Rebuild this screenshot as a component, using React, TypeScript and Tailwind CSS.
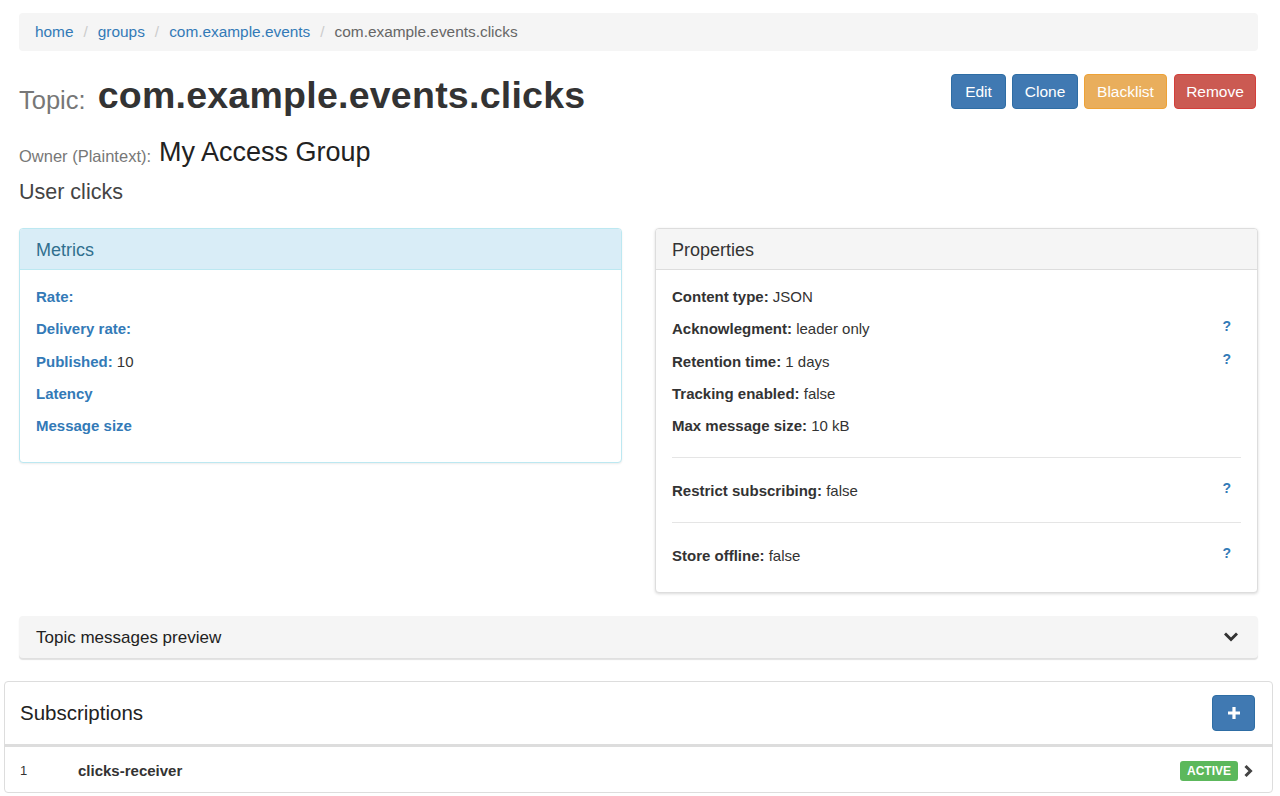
import React from "react";

const Q = () => (
  <span className="text-[14px] font-bold leading-none text-[#337ab7] relative -top-[3px]">?</span>
);

const Item = ({ label, value, help, blue }: { label: string; value?: string; help?: boolean; blue?: boolean }) => (
  <div className="flex items-center justify-between mb-[11.25px] leading-[21px]">
    <div>
      <span className={blue ? "font-bold text-[#337ab7]" : "font-bold text-[#333]"}>{label}</span>
      {value !== undefined && <span className="text-[#333]"> {value}</span>}
    </div>
    {help && <span className="pr-[10px]"><Q /></span>}
  </div>
);

export default function App() {
  return (
    <div className="min-h-[796px] bg-white font-['Liberation_Sans',Arial,sans-serif] text-[15px] text-[#333]">
      <div className="pl-[4px] pr-[7px]">
        <div className="px-[15px] pt-[13px]">
          {/* breadcrumb */}
          <div className="flex h-[38px] items-center rounded-[4px] bg-[#f5f5f5] px-[16px] text-[15.4px]">
            <span className="text-[#337ab7]">home</span>
            <span className="px-[10px] text-[#ccc]">/</span>
            <span className="text-[#337ab7]">groups</span>
            <span className="px-[10px] text-[#ccc]">/</span>
            <span className="text-[#337ab7]">com.example.events</span>
            <span className="px-[10px] text-[#ccc]">/</span>
            <span className="text-[#666]">com.example.events.clicks</span>
          </div>

          {/* title */}
          <div className="mt-[23px] flex items-start justify-between">
            <h1 className="flex h-[44px] items-end pb-[4px] leading-none">
              <span className="text-[25.5px] text-[#777] mr-[12px] mb-[1px]">Topic:</span>
              <span className="text-[37.5px] font-bold tracking-[0.25px] text-[#333]">com.example.events.clicks</span>
            </h1>
            <div className="flex gap-[6px] pr-[2px] text-[15.5px] text-white">
              <button className="h-[35px] w-[55px] rounded-[4px] border border-[#2e6da4] bg-[#4079b2] pt-[1px]">Edit</button>
              <button className="h-[35px] w-[66px] rounded-[4px] border border-[#2e6da4] bg-[#4079b2] pt-[1px]">Clone</button>
              <button className="h-[35px] w-[83px] rounded-[4px] border border-[#eea236] bg-[#e9ae5c] pt-[1px]">Blacklist</button>
              <button className="ml-[1px] h-[35px] w-[82px] rounded-[4px] border border-[#d43f3a] bg-[#cb5a52] pt-[1px]">Remove</button>
            </div>
          </div>

          {/* owner */}
          <div className="mt-[18px] flex h-[32px] items-end pb-[2px] leading-none">
            <span className="text-[16.5px] text-[#777] mr-[8px] mb-[2px]">Owner (Plaintext):</span>
            <span className="text-[27px] text-[#222]">My Access Group</span>
          </div>

          {/* description */}
          <div className="mt-[10px] h-[28px] text-[21.5px] leading-[28px] text-[#444]">User clicks</div>

          {/* panels */}
          <div className="mt-[22px] grid grid-cols-2 items-start gap-[33px]">
            <div className="rounded-[4px] border border-[#bce8f1] bg-white shadow-[0_1px_2px_rgba(0,0,0,0.08)]">
              <div className="flex h-[41px] items-center rounded-t-[3px] border-b border-[#bce8f1] bg-[#d9edf7] px-[16px] pt-[2px] text-[18px] text-[#31708f]">
                Metrics
              </div>
              <div className="px-[16px] pt-[16px] pb-[15px]">
                <Item label="Rate:" blue />
                <Item label="Delivery rate:" blue />
                <Item label="Published:" value="10" blue />
                <Item label="Latency" blue />
                <Item label="Message size" blue />
              </div>
            </div>

            <div className="rounded-[4px] border border-[#ddd] bg-white shadow-[0_1px_3px_rgba(0,0,0,0.15)]">
              <div className="flex h-[41px] items-center rounded-t-[3px] border-b border-[#ddd] bg-[#f5f5f5] px-[16px] pt-[2px] text-[18px] text-[#333]">
                Properties
              </div>
              <div className="px-[16px] pt-[16px] pb-[15px]">
                <Item label="Content type:" value="JSON" />
                <Item label="Acknowlegment:" value="leader only" help />
                <Item label="Retention time:" value="1 days" help />
                <Item label="Tracking enabled:" value="false" />
                <Item label="Max message size:" value="10 kB" />
                <hr className="mt-[21px] mb-[22px] border-t border-[#e5e5e5]" />
                <Item label="Restrict subscribing:" value="false" help />
                <hr className="mt-[21px] mb-[22px] border-t border-[#e5e5e5]" />
                <Item label="Store offline:" value="false" help />
              </div>
            </div>
          </div>

          {/* topic messages preview */}
          <div className="mt-[23px] flex h-[42px] items-center justify-between rounded-[4px] bg-[#f5f5f5] px-[17px] shadow-[0_2px_1px_rgba(0,0,0,0.12)]">
            <span className="text-[17px] text-[#222]">Topic messages preview</span>
            <svg width="14" height="10" viewBox="0 0 14 10" className="mr-[3px]">
              <path d="M2 2.5 L7 7.5 L12 2.5" fill="none" stroke="#333" strokeWidth="3" strokeLinecap="square" />
            </svg>
          </div>
        </div>

        {/* subscriptions */}
        <div className="mt-[23px] rounded-[4px] border border-[#ddd] bg-white">
          <div className="flex h-[65px] items-center justify-between border-b-[3px] border-[#ddd] px-[15px]">
            <span className="text-[20.5px] text-[#222]">Subscriptions</span>
            <button className="mr-[2px] flex h-[36px] w-[43px] items-center justify-center rounded-[4px] border border-[#2e6da4] bg-[#4079b2]">
              <svg width="14" height="14" viewBox="0 0 14 14">
                <path d="M7 1 V13 M1 7 H13" stroke="white" strokeWidth="3.2" />
              </svg>
            </button>
          </div>
          <div className="flex h-[45px] items-center justify-between px-[15px] pt-[2px]">
            <div className="flex items-center">
              <span className="w-[58px] text-[13px] text-[#333]">1</span>
              <span className="text-[15px] font-bold text-[#333]">clicks-receiver</span>
            </div>
            <div className="flex items-center gap-[5px]">
              <span className="flex h-[20px] items-center rounded-[3px] bg-[#5cb85c] px-[7px] text-[12px] font-bold text-white">ACTIVE</span>
              <svg width="10" height="14" viewBox="0 0 10 14" className="mr-[4px]">
                <path d="M2.5 2 L7.5 7 L2.5 12" fill="none" stroke="#444" strokeWidth="3" />
              </svg>
            </div>
          </div>
        </div>
      </div>
    </div>
  );
}
